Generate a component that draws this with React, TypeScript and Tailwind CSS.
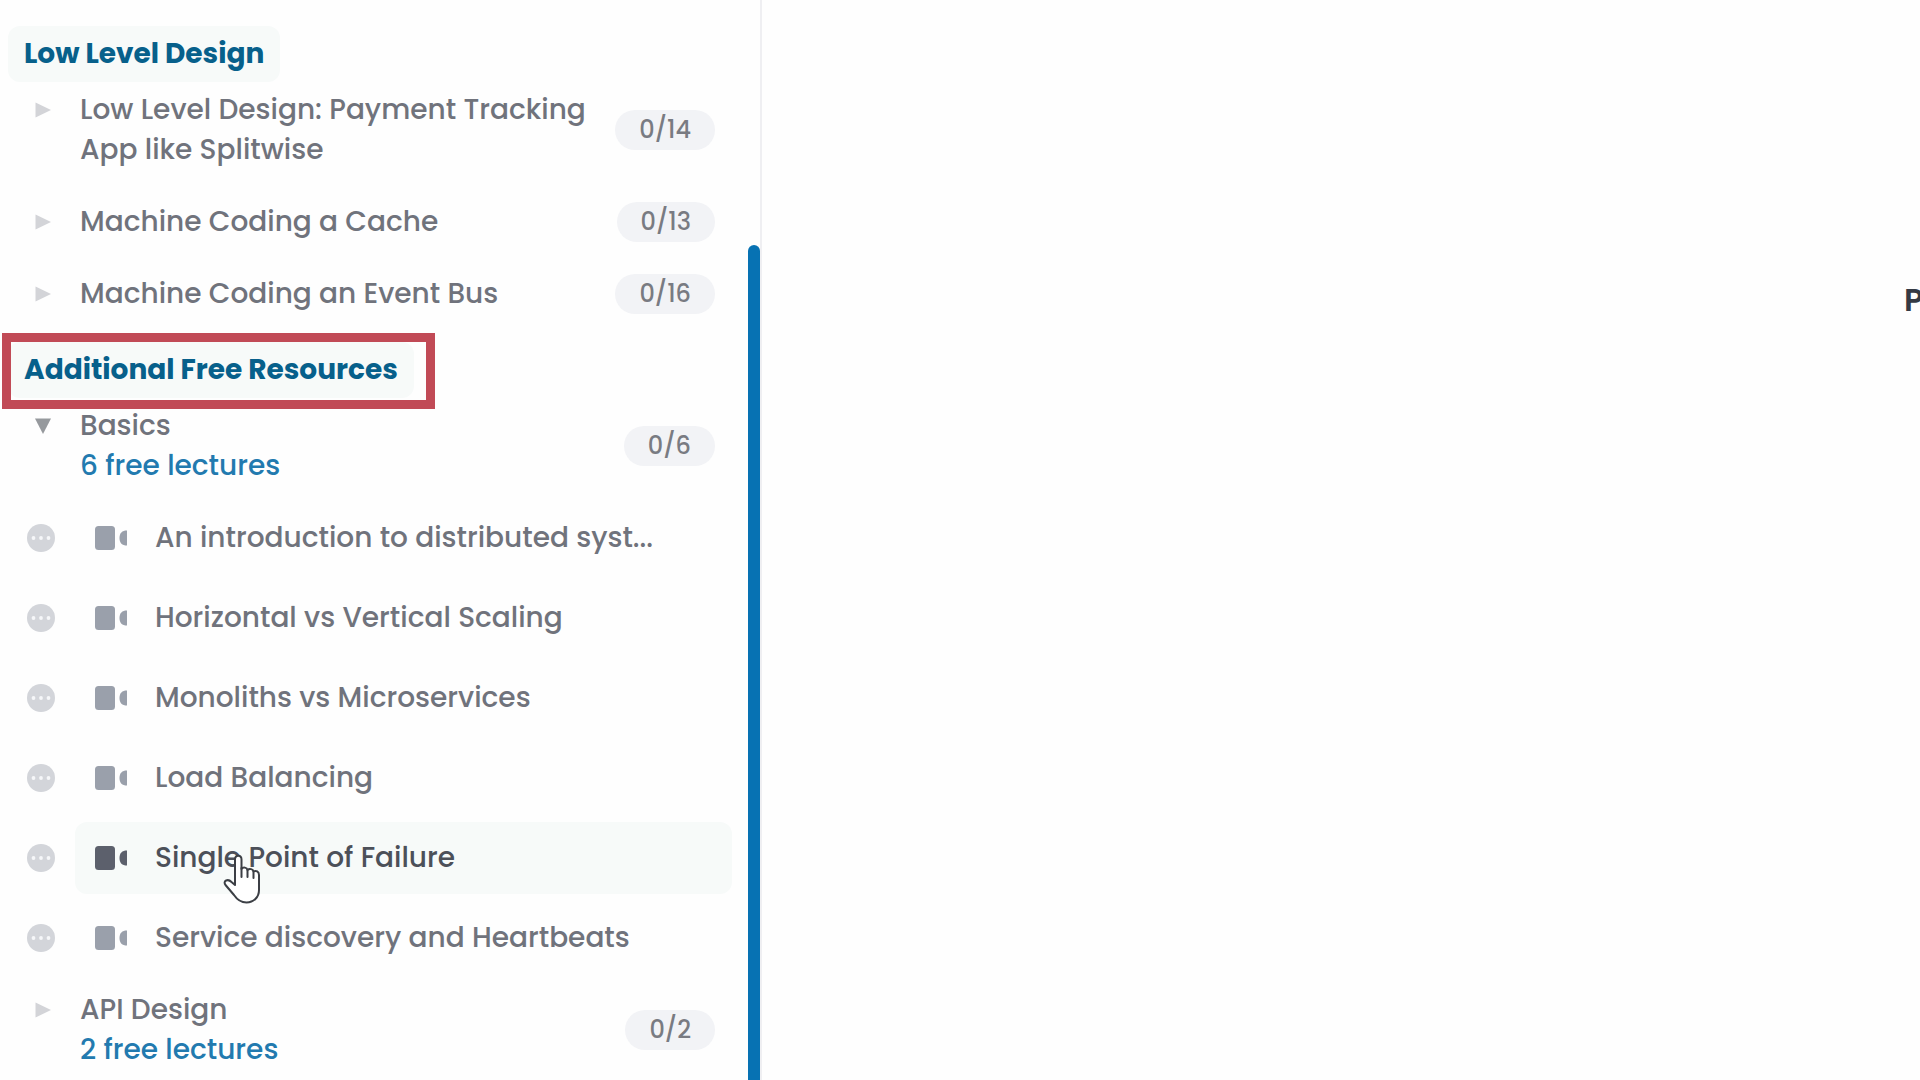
import React from "react";

type Lecture = { title: string; active?: boolean };
type Topic = { title: string; free?: string; count: string; open?: boolean; lectures?: Lecture[] };

const lowLevel: Topic[] = [
  { title: "Low Level Design: Payment Tracking App like Splitwise", count: "0/14" },
  { title: "Machine Coding a Cache", count: "0/13" },
  { title: "Machine Coding an Event Bus", count: "0/16" },
];

const basics: Topic = {
  title: "Basics",
  free: "6 free lectures",
  count: "0/6",
  open: true,
  lectures: [
    { title: "An introduction to distributed syst..." },
    { title: "Horizontal vs Vertical Scaling" },
    { title: "Monoliths vs Microservices" },
    { title: "Load Balancing" },
    { title: "Single Point of Failure", active: true },
    { title: "Service discovery and Heartbeats" },
  ],
};

const apiDesign: Topic = { title: "API Design", free: "2 free lectures", count: "0/2" };

function Arrow({ open }: { open?: boolean }) {
  return (
    <svg viewBox="0 0 16 16" className={open ? "size-4 text-[#96999d]" : "size-4 text-[#d3d4d8]"} fill="currentColor" aria-hidden="true">
      {open ? <path d="M0 0.5H16L8 16Z" /> : <path d="M0.5 0.5L16 8L0.5 15.5Z" />}
    </svg>
  );
}

function StatusDots() {
  return (
    <svg viewBox="0 0 28 28" className="size-7 shrink-0" aria-hidden="true">
      <circle cx="14" cy="14" r="14" fill="#d3d5da" />
      <g fill="#f6f7f9">
        <circle cx="6.5" cy="14" r="1.9" />
        <circle cx="14" cy="14" r="1.9" />
        <circle cx="21.5" cy="14" r="1.9" />
      </g>
    </svg>
  );
}

function VideoIcon() {
  return (
    <svg viewBox="0 0 32 24" className="h-6 w-8 shrink-0" fill="currentColor" aria-hidden="true">
      <rect x="0" y="0" width="20" height="24" rx="3.5" />
      <path d="M32 4.500V19.500C27 19.500 24.500 17 24.500 12S27 4.500 32 4.500Z" />
    </svg>
  );
}

function HandCursor() {
  return (
    <svg viewBox="0 0 38 50" className="absolute top-8 left-[148px] h-[50px] w-[38px]" aria-hidden="true">
      <path
        d="M12 31V5.500C12 0.500 18.500 0.500 18.500 5.500V15C20 12.800 24 13.200 24.500 16C26.500 14.200 30 15 30.500 17.500C33 16 36 17.500 36 21V36C36 43.500 30.500 48.500 23.500 48.500C17.500 48.500 14 45.500 11 41L2.500 31C-0.500 26.500 5 24.500 8.500 28Z"
        fill="#fff"
        stroke="#3c3f45"
        strokeWidth="2"
        strokeLinejoin="round"
      />
      <path d="M18.500 14V23M24.500 16V23M30.500 17.500V24" stroke="#3c3f45" strokeWidth="2" strokeLinecap="round" fill="none" />
    </svg>
  );
}

function Heading({ children, framed }: { children: string; framed?: boolean }) {
  return (
    <div className="relative ml-2 flex">
      <h2 className="rounded-xl bg-[#f7faf9] px-4 py-2 text-[28px] leading-10 font-bold text-[#07608b]">{children}</h2>
      {framed && <div className="pointer-events-none absolute -top-[9px] -left-1.5 h-[76px] w-[433px] border-[9px] border-[#c14a56]" />}
    </div>
  );
}

function TopicRow({ topic }: { topic: Topic }) {
  return (
    <button type="button" className="flex w-full items-center pr-[33px] pl-[35px] text-left">
      <span className="mr-[29px] flex h-10 items-center self-start">
        <Arrow open={topic.open} />
      </span>
      <span className="max-w-[530px] flex-1 text-[28px] leading-10 font-medium text-[#70737c]">
        {topic.title}
        {topic.free && <span className="block text-[#227aaf]">{topic.free}</span>}
      </span>
      <span className="ml-auto rounded-full bg-[#f2f3f6] px-6 text-2xl leading-10 font-medium text-[#797b82]">{topic.count}</span>
    </button>
  );
}

function LectureRow({ lecture }: { lecture: Lecture }) {
  return (
    <li className="flex items-center pl-[27px]">
      <StatusDots />
      <a
        href="#lecture"
        className={
          lecture.active
            ? "relative mr-4 ml-5 flex h-18 flex-1 items-center rounded-xl bg-[#f7faf9] pl-5 text-[#4c5059]"
            : "relative mr-4 ml-5 flex h-18 flex-1 items-center rounded-xl pl-5 text-[#70737c]"
        }
      >
        <span className={lecture.active ? "text-[#5c606c]" : "text-[#9aa0ab]"}>
          <VideoIcon />
        </span>
        <span className="ml-7 text-[28px] leading-10 font-medium whitespace-nowrap">{lecture.title}</span>
        {lecture.active && <HandCursor />}
      </a>
    </li>
  );
}

export default function App() {
  return (
    <div className="flex h-screen overflow-hidden bg-[#fefefe] font-['Poppins','Inter',sans-serif]">
      <aside className="flex w-[762px] shrink-0 border-r-2 border-[#efeff2]">
        <nav className="min-w-0 flex-1 pt-[26px]" aria-label="Course contents">
          <Heading>Low Level Design</Heading>
          <div className="mt-2 flex flex-col gap-8">
            {lowLevel.map((t) => (
              <TopicRow key={t.title} topic={t} />
            ))}
          </div>
          <div className="mt-7">
            <Heading framed>Additional Free Resources</Heading>
          </div>
          <div className="mt-2">
            <TopicRow topic={basics} />
          </div>
          <ul className="my-4 flex flex-col gap-2">
            {basics.lectures?.map((l) => (
              <LectureRow key={l.title} lecture={l} />
            ))}
          </ul>
          <TopicRow topic={apiDesign} />
        </nav>
        <div className="w-3 shrink-0 pt-[245px]">
          <div className="h-full rounded-t-full bg-[#0772b3]" />
        </div>
      </aside>
      <main className="flex flex-1 justify-end overflow-hidden pt-[276px]">
        <p className="w-4 text-[32px] leading-12 font-semibold text-[#343a44]">P</p>
      </main>
    </div>
  );
}
